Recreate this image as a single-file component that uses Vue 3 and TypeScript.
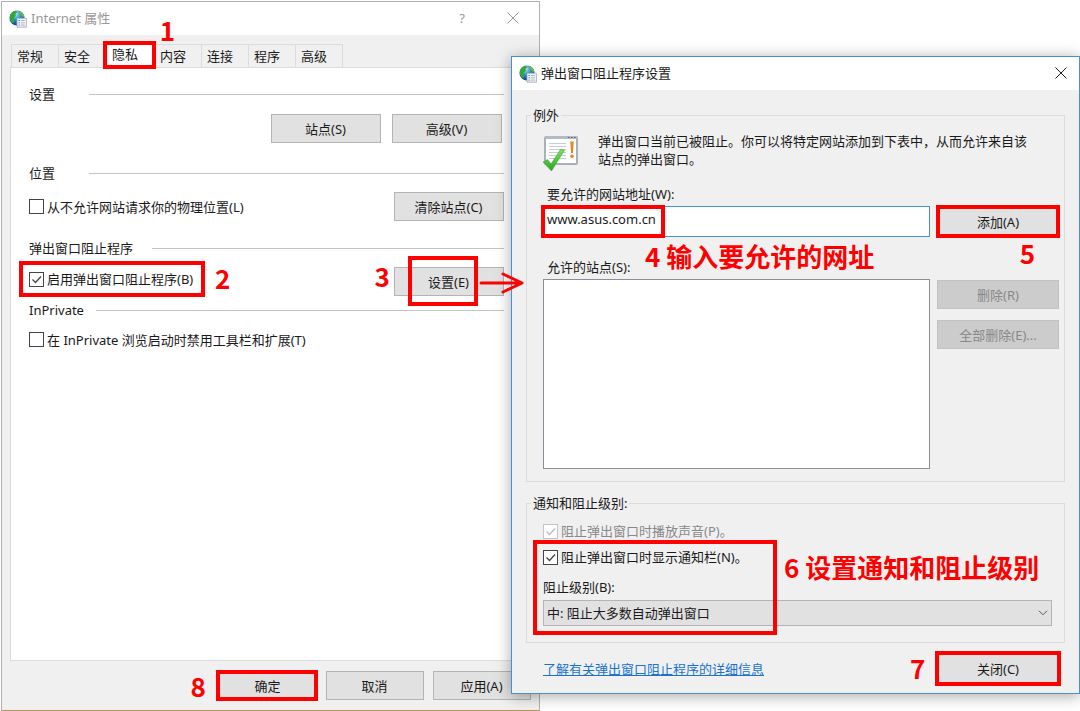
<script setup lang="ts">
import { ref } from 'vue'

interface Tab {
  id: string
  label: string
}

const tabs: Tab[] = [
  { id: 'general', label: '常规' },
  { id: 'security', label: '安全' },
  { id: 'privacy', label: '隐私' },
  { id: 'content', label: '内容' },
  { id: 'connections', label: '连接' },
  { id: 'programs', label: '程序' },
  { id: 'advanced', label: '高级' },
]

const activeTab = ref('privacy')
const blockLocation = ref(false)
const enableBlocker = ref(true)
const disableToolbars = ref(false)

const siteAddress = ref('www.asus.com.cn')
const playSound = ref(true)
const showBar = ref(true)
const levels: string[] = ['高: 阻止所有弹出窗口', '中: 阻止大多数自动弹出窗口', '低: 允许来自安全站点的弹出窗口']
const level = ref(levels[1])
</script>

<template>
  <div class="desktop">
    <section class="window properties" aria-label="Internet 属性">
      <header class="titlebar inactive">
        <svg class="globe" viewBox="0 0 18 18" aria-hidden="true">
          <defs>
            <radialGradient id="sea-a" cx="0.4" cy="0.25" r="0.8">
              <stop offset="0" stop-color="#b9e6f5" />
              <stop offset="0.45" stop-color="#2f8fcf" />
              <stop offset="1" stop-color="#0c2f7c" />
            </radialGradient>
          </defs>
          <circle cx="8" cy="8" r="7.6" fill="url(#sea-a)" />
          <path d="M1 5C2.500 2 5 .8 7 .8L8 2 6.500 4 6.800 6 4.500 8 5.500 10.500 4.500 13.500C2 12 .2 9 1 5Z" fill="#35a637" />
          <path d="M10.500 1C13.500 2 15.300 4.500 15.500 7L13 6.500 12 4.500 10 3.500Z" fill="#5fc13d" />
          <path d="M8 8.200h9.400v9H8z" fill="#f4f6f9" stroke="#9aa4ae" stroke-width=".8" />
          <path d="M9.500 10.500h1.300M9.500 12.800h1.300M9.500 15.100h1.300" stroke="#3182bd" />
          <path d="M11.800 10.500h4M11.800 12.800h4M11.800 15.100h4" stroke="#a9b3bd" />
        </svg>
        <h1 class="title">Internet 属性</h1>
        <button class="caption-button" type="button" aria-label="帮助">?</button>
        <button class="caption-button" type="button" aria-label="关闭">
          <svg viewBox="0 0 12 12" class="cross"><path d="M.5.5l11 11M11.500.5l-11 11" /></svg>
        </button>
      </header>

      <div class="tabs" role="tablist">
        <button
          v-for="tab in tabs"
          :key="tab.id"
          type="button"
          role="tab"
          class="tab"
          :class="{ active: tab.id === activeTab }"
          :aria-selected="tab.id === activeTab"
          @click="activeTab = tab.id"
        >
          {{ tab.label }}
          <template v-if="tab.id === 'privacy'">
            <span class="frame frame-tab"></span>
            <span class="step step-1">1</span>
          </template>
        </button>
      </div>

      <div class="panel" role="tabpanel">
        <h2 class="divider wide">设置</h2>
        <div class="row actions">
          <button type="button" class="btn">站点(S)</button>
          <button type="button" class="btn">高级(V)</button>
        </div>

        <h2 class="divider wide">位置</h2>
        <div class="row">
          <label class="check">
            <span class="box">
              <input v-model="blockLocation" type="checkbox" />
              <svg viewBox="0 0 15 15"><path d="M3.500 7.500l3 3 5.500-6" /></svg>
            </span>
            从不允许网站请求你的物理位置(L)
          </label>
          <button type="button" class="btn">清除站点(C)</button>
        </div>

        <h2 class="divider medium">弹出窗口阻止程序</h2>
        <div class="row">
          <div class="marked">
            <label class="check enable">
              <span class="box">
                <input v-model="enableBlocker" type="checkbox" />
                <svg viewBox="0 0 15 15"><path d="M3.500 7.500l3 3 5.500-6" /></svg>
              </span>
              启用弹出窗口阻止程序(B)
            </label>
            <span class="frame frame-enable"></span>
            <span class="step step-2">2</span>
          </div>
          <div class="marked">
            <button type="button" class="btn">设置(E)</button>
            <span class="frame frame-settings"></span>
            <span class="step step-3">3</span>
            <svg class="arrow" viewBox="0 0 46 24" aria-hidden="true">
              <path d="M2 12h40M24 3l19 9-19 9" />
            </svg>
          </div>
        </div>

        <h2 class="divider narrow">InPrivate</h2>
        <div class="row">
          <label class="check">
            <span class="box">
              <input v-model="disableToolbars" type="checkbox" />
              <svg viewBox="0 0 15 15"><path d="M3.500 7.500l3 3 5.500-6" /></svg>
            </span>
            在 InPrivate 浏览启动时禁用工具栏和扩展(T)
          </label>
        </div>
      </div>

      <footer class="footer">
        <div class="marked">
          <button type="button" class="btn">确定</button>
          <span class="frame frame-button"></span>
          <span class="step step-8">8</span>
        </div>
        <button type="button" class="btn">取消</button>
        <button type="button" class="btn">应用(A)</button>
      </footer>
    </section>

    <section class="window popup" aria-label="弹出窗口阻止程序设置">
      <header class="titlebar">
        <svg class="globe" viewBox="0 0 18 18" aria-hidden="true">
          <circle cx="8" cy="8" r="7.6" fill="url(#sea-a)" />
          <path d="M1 5C2.500 2 5 .8 7 .8L8 2 6.500 4 6.800 6 4.500 8 5.500 10.500 4.500 13.500C2 12 .2 9 1 5Z" fill="#35a637" />
          <path d="M10.500 1C13.500 2 15.300 4.500 15.500 7L13 6.500 12 4.500 10 3.500Z" fill="#5fc13d" />
          <path d="M8 8.200h9.400v9H8z" fill="#f4f6f9" stroke="#9aa4ae" stroke-width=".8" />
          <path d="M9.500 10.500h1.300M9.500 12.800h1.300M9.500 15.100h1.300" stroke="#3182bd" />
          <path d="M11.800 10.500h4M11.800 12.800h4M11.800 15.100h4" stroke="#a9b3bd" />
        </svg>
        <h1 class="title">弹出窗口阻止程序设置</h1>
        <button class="caption-button" type="button" aria-label="关闭">
          <svg viewBox="0 0 12 12" class="cross"><path d="M.5.5l11 11M11.500.5l-11 11" /></svg>
        </button>
      </header>

      <div class="popup-body">
        <fieldset class="group exceptions">
          <legend>例外</legend>
          <div class="intro">
            <svg class="intro-icon" viewBox="0 0 36 36" aria-hidden="true">
              <defs>
                <linearGradient id="tick-green" x1="0" y1="0" x2="0" y2="1">
                  <stop offset="0" stop-color="#7be05a" />
                  <stop offset="1" stop-color="#2aa32a" />
                </linearGradient>
              </defs>
              <rect x="2" y="2" width="32" height="27" rx="1" fill="#fff" stroke="#a9b0ba" stroke-width="2" />
              <path d="M2 2.500h32" stroke="#b4bac4" stroke-width="3" />
              <path d="M25 2.500h1.500M28 2.500h1.500M31 2.500h1.500" stroke="#5c6470" stroke-width="1.200" />
              <path d="M6 8.500h17M6 11.500h17M6 14.500h17M6 17.500h17M6 20.500h17M6 23.500h17" stroke="#c9ccd0" />
              <path d="M27.300 6.500h3.400l-.8 11.500h-1.800z" fill="#e8861c" />
              <circle cx="29" cy="21.300" r="1.800" fill="#e8861c" />
              <path d="M0 27l4.500-2.500 3.500 4.500L17.500 14.500l4 .5L8.500 36z" fill="url(#tick-green)" stroke="#35b035" stroke-width=".6" />
            </svg>
            <p>弹出窗口当前已被阻止。你可以将特定网站添加到下表中，从而允许来自该站点的弹出窗口。</p>
          </div>

          <label class="field-label" for="site-address">要允许的网站地址(W):</label>
          <div class="pair">
            <div class="marked">
              <input id="site-address" v-model="siteAddress" class="address" type="text" spellcheck="false" />
              <span class="frame frame-address"></span>
              <span class="step step-4">4 输入要允许的网址</span>
            </div>
            <div class="marked">
              <button type="button" class="btn btn-add">添加(A)</button>
              <span class="frame frame-add"></span>
              <span class="step step-5">5</span>
            </div>
          </div>

          <p id="allowed-label" class="field-label list-label">允许的站点(S):</p>
          <div class="pair">
            <div class="site-list" role="listbox" aria-labelledby="allowed-label"></div>
            <div class="stack">
              <button type="button" class="btn" disabled>删除(R)</button>
              <button type="button" class="btn" disabled>全部删除(E)...</button>
            </div>
          </div>
        </fieldset>

        <fieldset class="group notify">
          <legend>通知和阻止级别:</legend>
          <label class="check disabled">
            <span class="box">
              <input v-model="playSound" type="checkbox" disabled />
              <svg viewBox="0 0 15 15"><path d="M3.500 7.500l3 3 5.500-6" /></svg>
            </span>
            阻止弹出窗口时播放声音(P)。
          </label>
          <div class="marked">
            <label class="check">
              <span class="box">
                <input v-model="showBar" type="checkbox" />
                <svg viewBox="0 0 15 15"><path d="M3.500 7.500l3 3 5.500-6" /></svg>
              </span>
              阻止弹出窗口时显示通知栏(N)。
            </label>
            <label class="level-label" for="level">阻止级别(B):</label>
            <div class="select-wrap">
              <select id="level" v-model="level">
                <option v-for="item in levels" :key="item" :value="item">{{ item }}</option>
              </select>
              <svg class="chevron" viewBox="0 0 10 6" aria-hidden="true"><path d="M1 .8l4 4 4-4" /></svg>
            </div>
            <span class="frame frame-level"></span>
            <span class="step step-6">6 设置通知和阻止级别</span>
          </div>
        </fieldset>

        <div class="popup-footer">
          <a href="#">了解有关弹出窗口阻止程序的详细信息</a>
          <div class="marked">
            <button type="button" class="btn">关闭(C)</button>
            <span class="frame frame-close"></span>
            <span class="step step-7">7</span>
          </div>
        </div>
      </div>
    </section>
  </div>
</template>

<style>
body {
  margin: 0;
  background: #fff;
}
</style>

<style scoped>
.desktop,
.desktop * {
  box-sizing: border-box;
}

.desktop {
  position: relative;
  min-height: 100vh;
  padding: 1px 0 0 1px;
  overflow: hidden;
  background: #fff;
  color: #1a1a1a;
  font: 13px/20px "Noto Sans", "Noto Sans CJK SC", sans-serif;
}

.desktop button,
.desktop input,
.desktop select {
  margin: 0;
  color: inherit;
  font: inherit;
}

h1,
h2,
p {
  margin: 0;
  font: inherit;
}

.window {
  display: flex;
  flex-direction: column;
  background: #f0f0f0;
}

.properties {
  width: calc(50% - 1px);
  min-height: calc(100vh - 1px);
  border: 1px solid #b0b0b0;
  border-bottom-color: #b09a50;
}

.popup {
  position: absolute;
  z-index: 1;
  top: 56px;
  right: 0;
  left: 511px;
  border: 1px solid #4590d6;
  box-shadow: 0 2px 14px rgb(0 0 0 / 35%);
}

.titlebar {
  display: flex;
  align-items: center;
  height: 33px;
  padding-left: 7px;
  background: #fff;
}

.titlebar.inactive {
  color: #999;
}

.globe {
  width: 18px;
  height: 18px;
  margin-right: 4px;
}

.title {
  flex: 1;
  padding-bottom: 2px;
}

.caption-button {
  display: grid;
  place-items: center;
  width: 36px;
  height: 32px;
  padding: 0 0 1px;
  border: 0;
  background: none;
}

.inactive .caption-button {
  width: 51px;
}

.cross {
  width: 12px;
  height: 12px;
  fill: none;
  stroke: currentColor;
}

.tabs {
  display: flex;
  align-items: flex-end;
  height: 32px;
  padding-left: 9px;
}

.tab {
  position: relative;
  width: 48px;
  height: 23px;
  padding: 0 5px;
  border: 1px solid #dcdcdc;
  border-bottom: 0;
  background: #f0f0f0;
  text-align: left;
}

.desktop .tab {
  margin-right: -1px;
}

.tab.active {
  z-index: 1;
  width: 50px;
  height: 26px;
  padding-bottom: 2px;
  padding-left: 6px;
  background: #fff;
}

.panel {
  flex: 1;
  margin: 0 8px;
  padding: 16px 26px 0 18px;
  border: 1px solid #dcdcdc;
  background: #fff;
}

.divider {
  display: flex;
  align-items: center;
}

.divider::after {
  flex: 1;
  height: 1px;
  background: #c4c4c4;
  content: "";
}

.wide {
  gap: 34px;
}

.medium {
  gap: 19px;
}

.narrow {
  gap: 12px;
}

.row {
  display: flex;
  align-items: center;
  justify-content: space-between;
  min-height: 29px;
  margin: 9px 0 17px;
}

.row.actions {
  gap: 11px;
  justify-content: flex-end;
  margin: 10px 0 20px;
  padding-right: 2px;
}

.narrow + .row {
  margin-top: 5px;
}

.medium + .row {
  align-items: flex-start;
  margin-bottom: 4px;
}

.btn {
  display: block;
  width: 110px;
  height: 29px;
  padding: 0;
  border: 1px solid #b4b4b4;
  background: #e1e1e1;
}

.btn:disabled {
  border-color: #c2c2c2;
  background: #ccc;
  color: #888;
}

.check {
  display: flex;
  align-items: center;
  gap: 3px;
}

.check.enable {
  padding-top: 2px;
}

.box {
  position: relative;
  width: 15px;
  height: 15px;
}

.box input {
  display: block;
  width: 15px;
  height: 15px;
  appearance: none;
  border: 1px solid #444;
  background: #fff;
}

.box svg {
  position: absolute;
  inset: 0;
  fill: none;
  stroke: #444;
  stroke-width: 1.3;
  pointer-events: none;
  visibility: hidden;
}

.box input:checked + svg {
  visibility: visible;
}

.check.disabled {
  color: #888;
}

.disabled .box input {
  border-color: #c4c4c4;
}

.disabled .box svg {
  stroke: #bbb;
}

.footer {
  display: flex;
  justify-content: flex-end;
  gap: 9px;
  padding: 10px 8px;
}

.footer .btn {
  width: 98px;
}

.marked {
  position: relative;
}

.popup-body {
  padding: 15px 14px 8px;
}

.group {
  min-width: 0;
  margin: 0;
  padding: 0 5px 12px 16px;
  border: 1px solid #dcdcdc;
}

.group legend {
  margin-left: -12px;
  padding: 0 2px;
}

.intro {
  display: flex;
  gap: 19px;
  margin-top: 7px;
  padding-right: 20px;
  line-height: 18px;
}

.intro-icon {
  flex: none;
  width: 36px;
  height: 36px;
  margin-top: 3px;
}

.field-label {
  display: block;
  margin: 13px 0 2px 4px;
}

.list-label {
  margin-top: 20px;
}

.pair {
  display: grid;
  grid-template-columns: 1fr 122px;
  gap: 7px;
}

.pair .btn {
  width: 100%;
}

.pair .btn-add {
  height: 31px;
}

.address {
  display: block;
  width: 100%;
  height: 31px;
  padding: 0 3px 6px;
  border: 1px solid #4590d6;
  outline: 0;
  background: #fff;
}

.site-list {
  height: 190px;
  border: 1px solid #8a8e96;
  background: #fff;
}

.stack {
  display: flex;
  flex-direction: column;
  gap: 11px;
  padding-top: 1px;
}

.notify {
  margin-top: 11px;
  padding-right: 12px;
  padding-bottom: 16px;
}

.notify > .check {
  margin: 8px 0 6px;
}

.level-label {
  display: block;
  margin: 10px 0 3px;
}

.select-wrap {
  position: relative;
}

select {
  display: block;
  width: 100%;
  height: 26px;
  padding: 0 24px 0 3px;
  appearance: none;
  border: 1px solid #b4b4b4;
  border-radius: 0;
  background: #e1e1e1;
}

.chevron {
  position: absolute;
  top: 10px;
  right: 4px;
  width: 10px;
  height: 6px;
  fill: none;
  stroke: #555;
  pointer-events: none;
}

.popup-footer {
  display: flex;
  align-items: center;
  justify-content: space-between;
  padding: 11px 7px 2px 17px;
}

.popup-footer .btn {
  width: 120px;
}

a {
  color: #1a73d0;
  text-decoration: underline;
}

/* Numbered walkthrough marks */
.frame {
  position: absolute;
  z-index: 2;
  border: 4px solid #f00;
  pointer-events: none;
}

.frame-button {
  inset: -1px -1px -1px -3px;
}

.frame-close {
  inset: -3px;
}

.frame-add {
  inset: -1px;
}

.frame-tab {
  inset: -1px -2px -2px -3px;
}

.frame-enable {
  inset: -6px -12px -8px -10px;
}

.frame-settings {
  inset: -11px 26px -10px 14px;
}

.frame-address {
  inset: -1px auto -1px -2px;
  width: 124px;
}

.frame-level {
  inset: -7px auto -9px -10px;
  width: 244px;
}

.step {
  position: absolute;
  z-index: 2;
  color: #f00;
  font: 700 26px/30px "Noto Sans CJK SC", sans-serif;
  white-space: nowrap;
  pointer-events: none;
}

.step-1 {
  top: -27px;
  right: -21px;
}

.step-2 {
  top: -4px;
  right: -37px;
}

.step-3 {
  top: -6px;
  left: -19px;
}

.step-4 {
  top: 35px;
  left: 102px;
}

.step-5 {
  top: 32px;
  right: 24px;
}

.step-6 {
  top: 5px;
  left: 241px;
}

.step-7 {
  top: -1px;
  left: -28px;
}

.step-8 {
  top: 0;
  left: -28px;
}

.arrow {
  position: absolute;
  z-index: 2;
  top: 4px;
  right: -21px;
  width: 46px;
  height: 24px;
  fill: none;
  stroke: #f00;
  stroke-linecap: round;
  stroke-linejoin: round;
  stroke-width: 3;
}
</style>
